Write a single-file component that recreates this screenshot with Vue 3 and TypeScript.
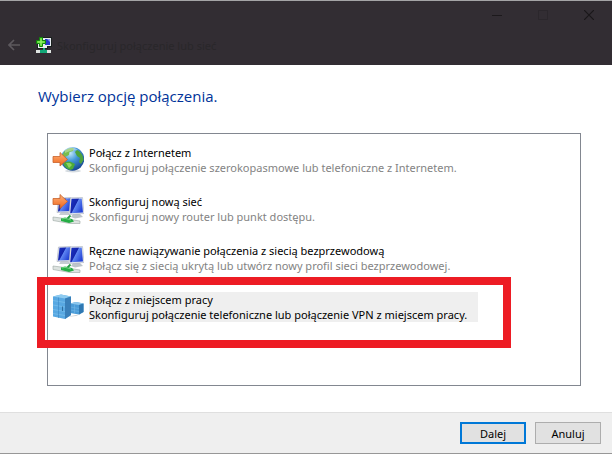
<script setup lang="ts">
import { ref } from 'vue'

type IconName = 'globe' | 'router' | 'wireless' | 'workplace'

interface ConnectionOption {
  id: IconName
  title: string
  description: string
}

const windowTitle = 'Skonfiguruj połączenie lub sieć'

const options: ConnectionOption[] = [
  {
    id: 'globe',
    title: 'Połącz z Internetem',
    description: 'Skonfiguruj połączenie szerokopasmowe lub telefoniczne z Internetem.',
  },
  {
    id: 'router',
    title: 'Skonfiguruj nową sieć',
    description: 'Skonfiguruj nowy router lub punkt dostępu.',
  },
  {
    id: 'wireless',
    title: 'Ręczne nawiązywanie połączenia z siecią bezprzewodową',
    description: 'Połącz się z siecią ukrytą lub utwórz nowy profil sieci bezprzewodowej.',
  },
  {
    id: 'workplace',
    title: 'Połącz z miejscem pracy',
    description: 'Skonfiguruj połączenie telefoniczne lub połączenie VPN z miejscem pracy.',
  },
]

const selected = ref<IconName>('workplace')
</script>

<template>
  <div class="window">
    <header class="titlebar">
      <div class="controls">
        <button class="control" type="button" aria-label="Minimalizuj">
          <svg width="10" height="10" viewBox="0 0 10 10"><path d="M0 5.5H10" stroke="#1c191c" /></svg>
        </button>
        <button class="control" type="button" aria-label="Maksymalizuj" disabled>
          <svg width="10" height="10" viewBox="0 0 10 10"><path d="M.5 .5H9.5V9.5H.5Z" fill="none" stroke="#2b272c" /></svg>
        </button>
        <button class="control" type="button" aria-label="Zamknij">
          <svg width="10" height="10" viewBox="0 0 10 10"><path d="M0 0L10 10M10 0L0 10" stroke="#1a171a" stroke-width="1.2" /></svg>
        </button>
      </div>
      <div class="caption">
        <button class="back" type="button" aria-label="Wstecz">
          <svg width="12" height="12" viewBox="0 0 12 12">
            <path d="M12 6H1.500M6 1L1 6L6 11" fill="none" stroke="#5d595e" stroke-width="1.7" />
          </svg>
        </button>
        <svg class="caption-icon" width="16" height="16" viewBox="0 0 16 16">
          <path d="M6 0H16V10H12V12H1V4H6Z" fill="#1b211f" />
          <path d="M7 1H15V9H11V11H2V5H7Z" fill="#e9edf2" />
          <path d="M9 2H14V8H9Z" fill="#2838c8" />
          <path d="M11 2H14V5Z" fill="#8c9cf0" />
          <path d="M0 13H15V16H0Z" fill="#dfe5e2" />
          <path d="M7 11H9V13H11V16H4V13H7Z" fill="#12a878" />
          <path d="M3.500 .5H6.500V3.500H9.500V6.500H6.500V9.500H3.500V6.500H.5V3.500H3.500Z" fill="#48d51f" stroke="#11850c" />
          <path d="M5 1.500V8.500M1.500 5H8.500" stroke="#a5f27c" />
        </svg>
        <span class="caption-text">{{ windowTitle }}</span>
      </div>
    </header>

    <main class="content">
      <h1 class="heading">Wybierz opcję połączenia.</h1>
      <ul class="options">
        <li v-for="option in options" :key="option.id">
          <button
            class="option"
            :class="{ selected: selected === option.id }"
            type="button"
            :aria-pressed="selected === option.id"
            @click="selected = option.id"
          >
            <svg v-if="option.id === 'globe'" width="32" height="32" viewBox="0 0 32 32">
              <defs>
                <radialGradient id="ocean" cx=".4" cy=".25" r=".8">
                  <stop offset="0" stop-color="#c3e8fb" />
                  <stop offset=".4" stop-color="#469bdb" />
                  <stop offset="1" stop-color="#103e8c" />
                </radialGradient>
                <linearGradient id="orange-globe" x1="0" y1="0" x2="0" y2="1">
                  <stop offset="0" stop-color="#ffb27a" />
                  <stop offset="1" stop-color="#ef6518" />
                </linearGradient>
              </defs>
              <ellipse cx="21" cy="27" rx="8" ry="1.500" fill="#d5dbe0" />
              <circle cx="20.500" cy="15" r="11.700" fill="url(#ocean)" />
              <path d="M12 8C15 4 19 3.500 22 4.500L21 7L17.500 8L17 11L13 13L10 12Z" fill="#78bd4e" />
              <path d="M25 6C29 8 31.500 12 31.500 16L29 20L27 18L28 14L25 12L23 8Z" fill="#4da33d" />
              <path d="M13 18L18 17.500L23 20L21 25L18 26C15 25 12 22 11.500 20Z" fill="#4daa38" />
              <path d="M14 19L18 19L20 21L17 24Z" fill="#8fd25f" />
              <path d="M13 6C17 2.500 23 3 26 6C22 6 17 7 13 9Z" fill="#fff" opacity=".35" />
              <path d="M1 12.500H8V8.500L15.500 15.500L8 22V18.500H1Z" fill="url(#orange-globe)" stroke="#c9622b" stroke-width=".8" />
            </svg>

            <svg v-else-if="option.id === 'workplace'" width="32" height="32" viewBox="0 0 32 32">
              <path d="M14 26L27 23.500L31 22L24 25Z" fill="#c5cbd0" />
              <path d="M18 12.500L24 11L31.500 12.500V21L27 23.500L18 22Z" fill="#4a9cd8" />
              <path d="M18 12.500L24 11L31.500 12.500L27 14Z" fill="#8cc6ec" />
              <path d="M27 14L31.500 12.500V21L27 23.500Z" fill="#2f78b2" />
              <path d="M18 16L27 17.500M18 19L27 20.500M22.500 13.500V22.500" fill="none" stroke="#76b9e6" stroke-width=".5" />
              <path d="M1 5.500L9 3.500L19 5.500V24L13 28L1 25.500Z" fill="#58a8e2" />
              <path d="M1 5.500L9 3.500L19 5.500L13 7.500Z" fill="#8ecbf0" />
              <path d="M13 7.500L19 5.500V24L13 28Z" fill="#397fb9" />
              <path d="M1 9.500L13 11.500M1 14L13 16M1 18.500L13 20.500M1 22.500L13 24.500" fill="none" stroke="#8bcaf1" stroke-width=".5" />
              <path d="M6.500 6.500V27" stroke="#3b87c2" stroke-width=".6" />
              <path d="M10.500 15.500V20" stroke="#225f90" stroke-width=".8" />
            </svg>

            <svg v-else width="32" height="32" viewBox="0 0 32 32">
              <defs>
                <linearGradient :id="`screen-${option.id}`" x1="0" y1="0" x2="1" y2=".6">
                  <stop offset="0" stop-color="#1c34c4" />
                  <stop offset=".48" stop-color="#1424ac" />
                  <stop offset=".54" stop-color="#5f86f2" />
                  <stop offset="1" stop-color="#2444d6" />
                </linearGradient>
                <linearGradient :id="`orange-${option.id}`" x1="0" y1="0" x2="0" y2="1">
                  <stop offset="0" stop-color="#ffb27a" />
                  <stop offset="1" stop-color="#ef6518" />
                </linearGradient>
              </defs>
              <path d="M9 19H16L18 22H7Z" fill="#c7cdd3" />
              <path d="M6.500 5L18.500 4.500V19L5 19.500Z" fill="#e2e6ee" stroke="#a9b0bc" stroke-width=".6" />
              <path d="M7.500 5.800L18 5.300V18L6 18.500Z" :fill="`url(#screen-${option.id})`" />
              <path d="M21 21H28L31 24L23 25.500L19 24Z" fill="#bdc4ca" />
              <path d="M18.500 4.800L30.500 4.500L32 20.500L17 21.500Z" fill="#eef1f6" stroke="#a9b0bc" stroke-width=".6" />
              <path d="M19.500 5.800L29.700 5.500L31 19.500L18.200 20.300Z" :fill="`url(#screen-${option.id})`" />
              <path d="M1 24L9 25L28 28V30.500L18 30.500L1 27.500Z" fill="#dde3e0" stroke="#9ba6a1" stroke-width=".6" />
              <path d="M9 25.500L13 24.500L20 26L22 28.500L17 30L9 28Z" fill="#25ad45" />
              <path d="M15 26L18.500 22.500" stroke="#249b43" stroke-width="1.8" />
              <path d="M10 26L13 25.300L19 27" fill="none" stroke="#87df91" stroke-width=".8" />
              <path
                v-if="option.id === 'router'"
                d="M1 5.500H8V1.500L15.500 8.500L8 15.500V11.500H1Z"
                :fill="`url(#orange-${option.id})`"
                stroke="#c9622b"
                stroke-width=".8"
              />
            </svg>

            <span class="option-text">
              <span class="option-title">{{ option.title }}</span>
              <span class="option-description">{{ option.description }}</span>
            </span>
            <span v-if="option.id === 'workplace'" class="marker" aria-hidden="true"></span>
          </button>
        </li>
      </ul>
    </main>

    <footer class="footer">
      <button class="action primary" type="button">Dalej</button>
      <button class="action" type="button">Anuluj</button>
    </footer>
  </div>
</template>

<style>
body {
  margin: 0;
  background: #fff;
}
</style>

<style scoped>
.window {
  box-sizing: border-box;
  min-height: 100vh;
  display: flex;
  flex-direction: column;
  border-top: 1px solid #a4a4a6;
  border-bottom: 1px solid #979797;
  background: #fff;
  color: #000;
  font-family: "Noto Sans", "Open Sans", sans-serif;
  font-size: 11px;
  line-height: 15px;
}

button {
  margin: 0;
  padding: 0;
  border: 0;
  background: none;
  color: inherit;
  font: inherit;
}

svg {
  display: block;
  flex: none;
}

.titlebar {
  height: 64px;
  background: #322d33;
}

.controls {
  display: flex;
  justify-content: flex-end;
  height: 28px;
}

.control {
  width: 46px;
  display: flex;
  align-items: center;
  justify-content: center;
}

.caption {
  display: flex;
  align-items: center;
  height: 32px;
  padding-left: 8px;
}

.back {
  margin-right: 16px;
}

.caption-text {
  margin-left: 5px;
  color: #29272a;
}

.content {
  flex: 1;
  display: flex;
  flex-direction: column;
  padding: 20px 31px 26px 38px;
}

.heading {
  margin: 0 0 26px;
  color: #003399;
  font-family: "Open Sans", "Noto Sans", sans-serif;
  font-size: 15px;
  font-weight: 400;
  line-height: 22px;
}

.options {
  flex: 1;
  display: flex;
  flex-direction: column;
  gap: 17px;
  margin: 0 0 0 9px;
  padding: 10px 4px;
  border: 1px solid #828790;
  list-style: none;
}

.option {
  position: relative;
  display: flex;
  align-items: center;
  gap: 5px;
  text-align: left;
  white-space: nowrap;
}

.option-text {
  display: flex;
  flex-direction: column;
  padding-right: 11px;
}

.option-description {
  color: #838383;
}

.selected .option-text {
  background: #efefef;
}

.selected .option-description {
  color: #000;
}

.marker {
  position: absolute;
  inset: -14px -33px -25px -15px;
  border: 8px solid #ed1c24;
  pointer-events: none;
}

.footer {
  display: flex;
  justify-content: flex-end;
  gap: 9px;
  padding: 9px 11px;
  border-top: 1px solid #dfdfdf;
  background: #efefef;
}

.action {
  box-sizing: border-box;
  width: 66px;
  height: 22px;
  border: 1px solid #adadad;
  background: #e1e1e1;
}

.primary {
  border: 2px solid #0078d7;
}
</style>
